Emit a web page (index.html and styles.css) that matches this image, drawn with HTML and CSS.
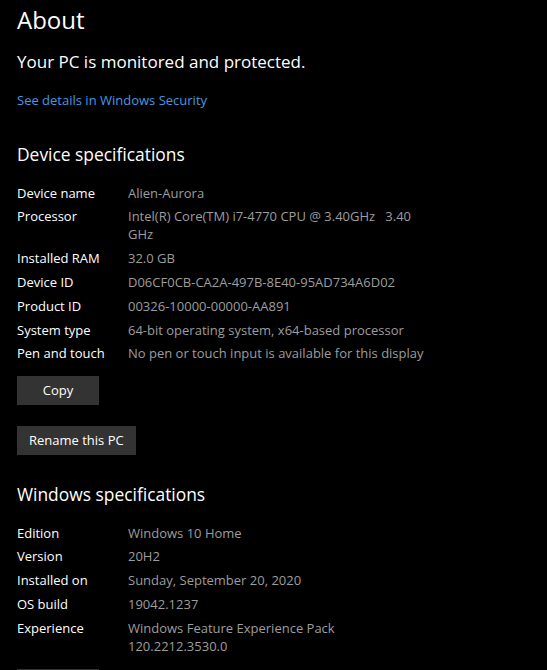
FILE: index.html
```html
<!DOCTYPE html>
<html lang="en">
<head>
<meta charset="utf-8">
<title>About</title>
<link rel="stylesheet" href="styles.css">
</head>
<body>
<main class="page">
  <h1 class="title">About</h1>
  <p class="status">Your PC is monitored and protected.</p>
  <a class="link" href="#">See details in Windows Security</a>

  <section class="section">
    <h2 class="heading">Device specifications</h2>
    <dl class="specs">
      <dt>Device name</dt><dd>Alien-Aurora</dd>
      <dt>Processor</dt><dd>Intel(R) Core(TM) i7-4770 CPU @ 3.40GHz&nbsp;&nbsp; 3.40<br>GHz</dd>
      <dt>Installed RAM</dt><dd>32.0 GB</dd>
      <dt>Device ID</dt><dd>D06CF0CB-CA2A-497B-8E40-95AD734A6D02</dd>
      <dt>Product ID</dt><dd>00326-10000-00000-AA891</dd>
      <dt>System type</dt><dd>64-bit operating system, x64-based processor</dd>
      <dt>Pen and touch</dt><dd>No pen or touch input is available for this display</dd>
    </dl>
    <div class="buttons">
      <button class="btn">Copy</button>
      <button class="btn">Rename this PC</button>
    </div>
  </section>

  <section class="section section-win">
    <h2 class="heading">Windows specifications</h2>
    <dl class="specs">
      <dt>Edition</dt><dd>Windows 10 Home</dd>
      <dt>Version</dt><dd>20H2</dd>
      <dt>Installed on</dt><dd>Sunday, September 20, 2020</dd>
      <dt>OS build</dt><dd>19042.1237</dd>
      <dt>Experience</dt><dd>Windows Feature Experience Pack<br>120.2212.3530.0</dd>
    </dl>
    <div class="buttons buttons-last">
      <button class="btn">Copy</button>
    </div>
  </section>
</main>
</body>
</html>
```

FILE: styles.css
```css
html, body {
  margin: 0;
  padding: 0;
  background: #000000;
}

body {
  font-family: "Open Sans", "Noto Sans", sans-serif;
  color: #ffffff;
  overflow: hidden;
}

.page {
  padding: 4px 0 0 17px;
  display: flex;
  flex-direction: column;
  align-items: flex-start;
}

.title {
  margin: 0;
  font-size: 24px;
  line-height: 32px;
  font-weight: 400;
}

.status {
  margin: 13.7px 0 0;
  font-size: 17px;
  line-height: 24px;
}

.link {
  margin-top: 17px;
  font-size: 13px;
  line-height: 18px;
  color: #4598e2;
  text-decoration: none;
}

.section {
  margin-top: 32.3px;
  display: flex;
  flex-direction: column;
  align-items: flex-start;
}

.section-win {
  margin-top: 26px;
}

.heading {
  margin: 0;
  font-size: 17.4px;
  line-height: 26px;
  font-weight: 400;
}

.specs {
  margin: 16.7px 0 0;
  display: grid;
  grid-template-columns: 111px auto;
  row-gap: 5.8px;
  font-size: 13px;
  line-height: 18px;
}

.specs dt {
  color: #ffffff;
}

.specs dd {
  margin: 0;
  color: #9d9d9d;
}

.buttons {
  margin-top: 13.5px;
  display: flex;
  flex-direction: column;
  align-items: flex-start;
  gap: 21px;
}

.buttons-last {
  margin-top: 14.5px;
}

.btn {
  height: 29px;
  min-width: 82px;
  padding: 0 12px;
  border: none;
  background: #333333;
  color: #ffffff;
  font-family: "Open Sans", "Noto Sans", sans-serif;
  font-size: 13px;
  line-height: 18px;
}
```
